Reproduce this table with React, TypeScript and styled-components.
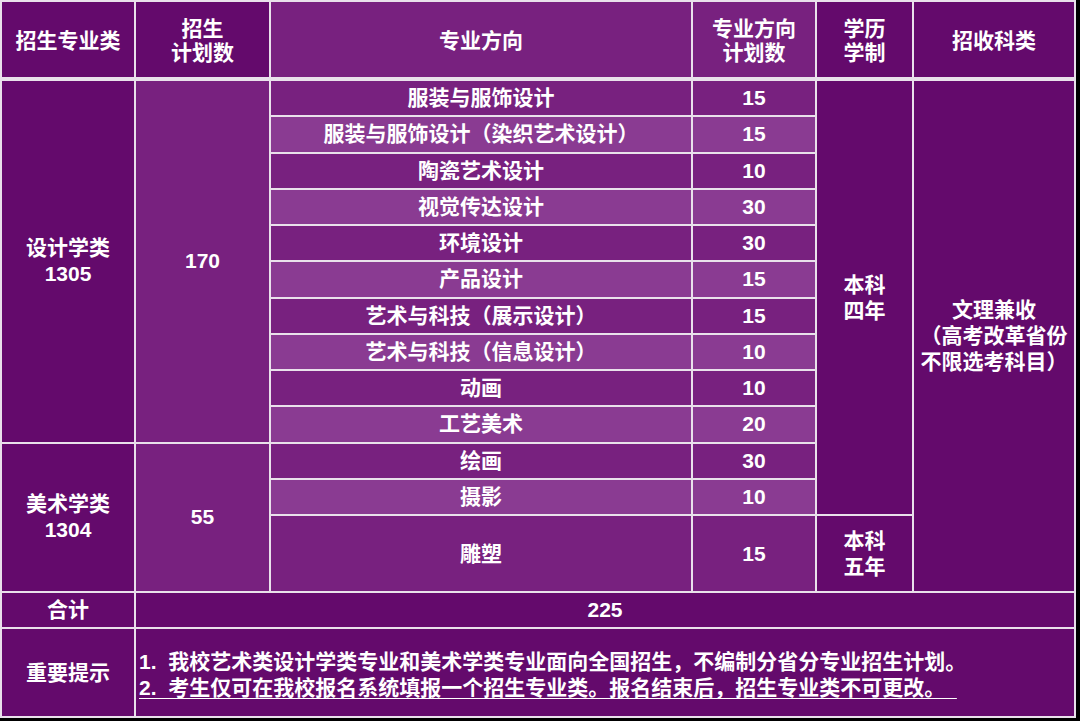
import * as React from 'react'
import styled, { createGlobalStyle, css } from 'styled-components'

const GlobalStyle = createGlobalStyle`
  html, body {
    margin: 0;
    padding: 0;
    background: #000;
  }
`

type Tone = 'dark' | 'mid' | 'light'

const toneColor: { [name in Tone]: string } = {
    dark: '#640a6c',
    mid: '#78217f',
    light: '#8a3b92',
}

const Table = styled.div`
    width: 1076px;
    height: 718px;
    box-sizing: border-box;
    padding: 2px;
    display: grid;
    grid-template-columns: 132px 133px 420px 122px 95px 160px;
    grid-template-rows: 77px repeat(12, 34.25px) 75px 34px 87px;
    gap: 2px;
    background: #e9e1eb;
    font-family: "Liberation Sans", "Noto Sans CJK SC", sans-serif;
    font-weight: 700;
    font-size: 21px;
    color: #fff;
`

interface CellProps {
    $tone?: Tone
    $col: number
    $row: number
    $colSpan?: number
    $rowSpan?: number
    $head?: boolean
    $left?: boolean
}

const Cell = styled.div<CellProps>`
    background: ${p => toneColor[p.$tone || 'dark']};
    grid-column: ${p => p.$col} / span ${p => p.$colSpan || 1};
    grid-row: ${p => p.$row} / span ${p => p.$rowSpan || 1};
    display: flex;
    flex-direction: column;
    align-items: ${p => (p.$left ? 'flex-start' : 'center')};
    justify-content: center;
    text-align: ${p => (p.$left ? 'left' : 'center')};
    line-height: 26px;
    white-space: nowrap;
    ${p => p.$head && css`
        margin-bottom: 2px;
        line-height: 24px;
        padding-top: 2px;
    `}
    ${p => p.$left && css`
        padding-left: 3px;
        padding-top: 4px;
    `}
`

const NoteLine = styled.div<{ $underline?: boolean }>`
    text-decoration: ${p => (p.$underline ? 'underline' : 'none')};
    text-decoration-thickness: 1px;
    text-underline-offset: 3px;
`

const majors: [string, number][] = [
    ['服装与服饰设计', 15],
    ['服装与服饰设计（染织艺术设计）', 15],
    ['陶瓷艺术设计', 10],
    ['视觉传达设计', 30],
    ['环境设计', 30],
    ['产品设计', 15],
    ['艺术与科技（展示设计）', 15],
    ['艺术与科技（信息设计）', 10],
    ['动画', 10],
    ['工艺美术', 20],
    ['绘画', 30],
    ['摄影', 10],
    ['雕塑', 15],
]

const App = () => {
    return (
        <>
            <GlobalStyle />
            <Table>
                <Cell $head $col={1} $row={1}>招生专业类</Cell>
                <Cell $head $col={2} $row={1}><span>招生</span><span>计划数</span></Cell>
                <Cell $head $tone="mid" $col={3} $row={1}>专业方向</Cell>
                <Cell $head $tone="mid" $col={4} $row={1}><span>专业方向</span><span>计划数</span></Cell>
                <Cell $head $col={5} $row={1}><span>学历</span><span>学制</span></Cell>
                <Cell $head $col={6} $row={1}>招收科类</Cell>

                <Cell $col={1} $row={2} $rowSpan={10}><span>设计学类</span><span>1305</span></Cell>
                <Cell $tone="mid" $col={2} $row={2} $rowSpan={10}>170</Cell>
                <Cell $col={1} $row={12} $rowSpan={3}><span>美术学类</span><span>1304</span></Cell>
                <Cell $tone="mid" $col={2} $row={12} $rowSpan={3}>55</Cell>

                {majors.map(([name, plan], i) => {
                    const tone: Tone = i % 2 === 0 ? 'mid' : 'light'
                    return (
                        <React.Fragment key={name}>
                            <Cell $tone={tone} $col={3} $row={i + 2}>{name}</Cell>
                            <Cell $tone={tone} $col={4} $row={i + 2}>{plan}</Cell>
                        </React.Fragment>
                    )
                })}

                <Cell $col={5} $row={2} $rowSpan={12}><span>本科</span><span>四年</span></Cell>
                <Cell $col={5} $row={14}><span>本科</span><span>五年</span></Cell>
                <Cell $col={6} $row={2} $rowSpan={13}>
                    <span>文理兼收</span>
                    <span>（高考改革省份</span>
                    <span>不限选考科目）</span>
                </Cell>

                <Cell $col={1} $row={15}>合计</Cell>
                <Cell $col={2} $row={15} $colSpan={5}>225</Cell>

                <Cell $col={1} $row={16}>重要提示</Cell>
                <Cell $left $col={2} $row={16} $colSpan={5}>
                    <NoteLine>1.&nbsp;&nbsp;我校艺术类设计学类专业和美术学类专业面向全国招生，不编制分省分专业招生计划。</NoteLine>
                    <NoteLine $underline>2.&nbsp;&nbsp;考生仅可在我校报名系统填报一个招生专业类。报名结束后，招生专业类不可更改。&nbsp;&nbsp;</NoteLine>
                </Cell>
            </Table>
        </>
    )
}

export default App
